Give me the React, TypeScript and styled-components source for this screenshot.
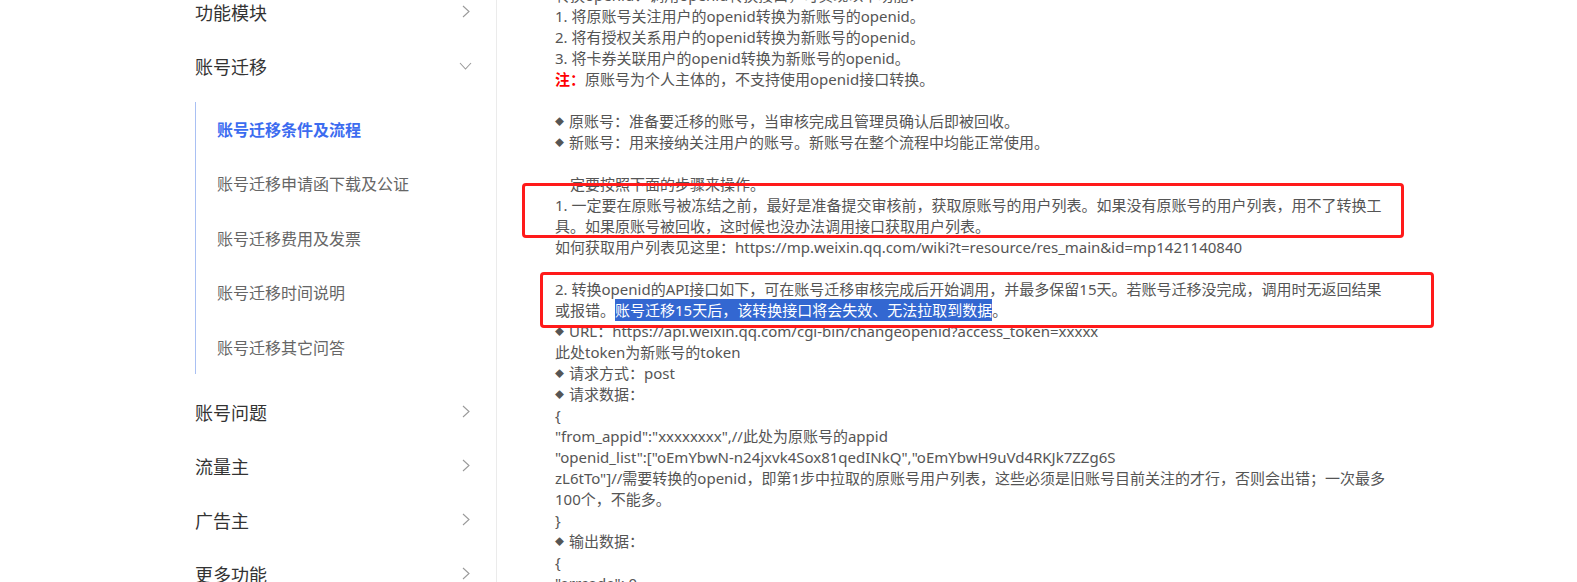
import React from 'react';
import styled, { createGlobalStyle } from 'styled-components';

const GlobalStyle = createGlobalStyle`
	html,
	body {
		margin: 0;
		padding: 0;
		background: #fff;
		overflow: hidden;
	}
	body {
		font-family: 'Noto Sans', 'Noto Sans CJK SC', sans-serif;
	}
`;

const menuBefore = ['功能模块'];
const menuAfter = ['账号问题', '流量主', '广告主', '更多功能'];
const subMenu = ['账号迁移条件及流程', '账号迁移申请函下载及公证', '账号迁移费用及发票', '账号迁移时间说明', '账号迁移其它问答'];

const ChevronRight: React.FC = () => (
	<svg width="8" height="13" viewBox="0 0 8 13" fill="none">
		<polyline points="1,1 7,6.5 1,12" stroke="#9a9a9a" strokeWidth="1.1" />
	</svg>
);

const ChevronDown: React.FC = () => (
	<svg width="13" height="8" viewBox="0 0 13 8" fill="none">
		<polyline points="1,1 6.5,7 12,1" stroke="#9a9a9a" strokeWidth="1.1" />
	</svg>
);

const App: React.FunctionComponent = () => {
	return (
		<>
			<GlobalStyle />
			<Page>
				<Sidebar>
					{menuBefore.map(label => (
						<MenuRow key={label}>
							<MenuLabel>{label}</MenuLabel>
							<RightIcon>
								<ChevronRight />
							</RightIcon>
						</MenuRow>
					))}
					<MenuRow>
						<MenuLabel>账号迁移</MenuLabel>
						<ChevronDown />
					</MenuRow>
					<SubList>
						{subMenu.map((label, i) => (
							<SubItem key={label} $active={i === 0}>
								{label}
							</SubItem>
						))}
					</SubList>
					{menuAfter.map(label => (
						<MenuRow key={label}>
							<MenuLabel>{label}</MenuLabel>
							<RightIcon>
								<ChevronRight />
							</RightIcon>
						</MenuRow>
					))}
				</Sidebar>

				<Main>
					<Article>
						<Block>
							<Line>转换openid：调用openid转换接口，可实现以下功能：</Line>
							<Line>1. 将原账号关注用户的openid转换为新账号的openid。</Line>
							<Line>2. 将有授权关系用户的openid转换为新账号的openid。</Line>
							<Line>3. 将卡券关联用户的openid转换为新账号的openid。</Line>
							<Line>
								<Note>注：</Note>原账号为个人主体的，不支持使用openid接口转换。
							</Line>
						</Block>

						<Block>
							<Line>
								<Bullet>◆</Bullet>原账号：准备要迁移的账号，当审核完成且管理员确认后即被回收。
							</Line>
							<Line>
								<Bullet>◆</Bullet>新账号：用来接纳关注用户的账号。新账号在整个流程中均能正常使用。
							</Line>
						</Block>

						<Block>
							<Line>一定要按照下面的步骤来操作。</Line>
							<Marked $top={-12} $right={-9} $bottom={-1} $left={-33}>
								1. 一定要在原账号被冻结之前，最好是准备提交审核前，获取原账号的用户列表。如果没有原账号的用户列表，用不了转换工具。如果原账号被回收，这时候也没办法调用接口获取用户列表。
							</Marked>
							<Line>如何获取用户列表见这里：https://mp.weixin.qq.com/wiki?t=resource/res_main&amp;id=mp1421140840</Line>
						</Block>

						<Block>
							<Marked $top={-7} $right={-39} $bottom={-7} $left={-15}>
								2. 转换openid的API接口如下，可在账号迁移审核完成后开始调用，并最多保留15天。若账号迁移没完成，调用时无返回结果或报错。
								<Selected>账号迁移15天后，该转换接口将会失效、无法拉取到数据</Selected>。
							</Marked>
							<Line>
								<Bullet>◆</Bullet>URL：https://api.weixin.qq.com/cgi-bin/changeopenid?access_token=xxxxx
							</Line>
							<Line>此处token为新账号的token</Line>
							<Line>
								<Bullet>◆</Bullet>请求方式：post
							</Line>
							<Line>
								<Bullet>◆</Bullet>请求数据：
							</Line>
							<Line>{'{'}</Line>
							<Line>"from_appid":"xxxxxxxx",//此处为原账号的appid</Line>
							<Line>
								"openid_list":["oEmYbwN-n24jxvk4Sox81qedINkQ","oEmYbwH9uVd4RKJk7ZZg6S
								<br />
								zL6tTo"]//需要转换的openid，即第1步中拉取的原账号用户列表，这些必须是旧账号目前关注的才行，否则会出错；一次最多100个，不能多。
							</Line>
							<Line>{'}'}</Line>
							<Line>
								<Bullet>◆</Bullet>输出数据：
							</Line>
							<Line>{'{'}</Line>
							<Line>"errcode": 0,</Line>
							<Line>"errmsg": "ok",</Line>
						</Block>
					</Article>
				</Main>
			</Page>
		</>
	);
};

/* ************** Layout ************** */
const Page = styled.div`
	display: flex;
	margin-top: -16px;
	height: 620px;
`;

/* ************** Sidebar ************** */
const Sidebar = styled.nav`
	display: flex;
	flex-direction: column;
	flex: 0 0 auto;
	box-sizing: border-box;
	width: 497px;
	padding: 0.5px 24px 0 195px;
	border-right: 1px solid #ebebeb;
`;

const MenuRow = styled.div`
	display: flex;
	align-items: center;
	justify-content: space-between;
	height: 54px;
	flex: 0 0 auto;
`;

const MenuLabel = styled.span`
	font-size: 18px;
	color: #333;
	font-family: 'Noto Sans CJK SC', sans-serif;
`;

const RightIcon = styled.span`
	display: flex;
	margin-right: 2px;
`;

const SubList = styled.div`
	display: flex;
	flex-direction: column;
	margin: 9px 0 10.5px;
	border-left: 1px solid #a9c0f3;
`;

const SubItem = styled.div<{ $active?: boolean }>`
	display: flex;
	align-items: center;
	height: 54.5px;
	padding-left: 21px;
	font-family: 'Noto Sans CJK SC', sans-serif;
	font-size: 16px;
	font-weight: ${props => (props.$active ? 700 : 400)};
	color: ${props => (props.$active ? '#3c6cf0' : '#666')};
`;

/* ************** Main ************** */
const Main = styled.main`
	flex: 1 1 auto;
	padding: 0.5px 0 0 58px;
`;

const Article = styled.article`
	width: 840px;
	font-size: 15px;
	line-height: 21px;
	color: #555;
`;

const Block = styled.div`
	margin-bottom: 21px;
`;

const Line = styled.div``;

const Marked = styled.div<{ $top: number; $right: number; $bottom: number; $left: number }>`
	position: relative;
	&::after {
		content: '';
		position: absolute;
		top: ${props => props.$top}px;
		right: ${props => props.$right}px;
		bottom: ${props => props.$bottom}px;
		left: ${props => props.$left}px;
		border: 3px solid #ff1a1a;
		border-radius: 4px;
		pointer-events: none;
	}
`;

const Note = styled.span`
	color: #f00;
	font-weight: 700;
`;

const Bullet = styled.span`
	display: inline-block;
	width: 14px;
	font-size: 9px;
	line-height: 1;
	color: #555;
	vertical-align: 2px;
`;

const Selected = styled.span`
	background: #3367d1;
	color: #fff;
	padding: 1px 0;
`;

export default App;
